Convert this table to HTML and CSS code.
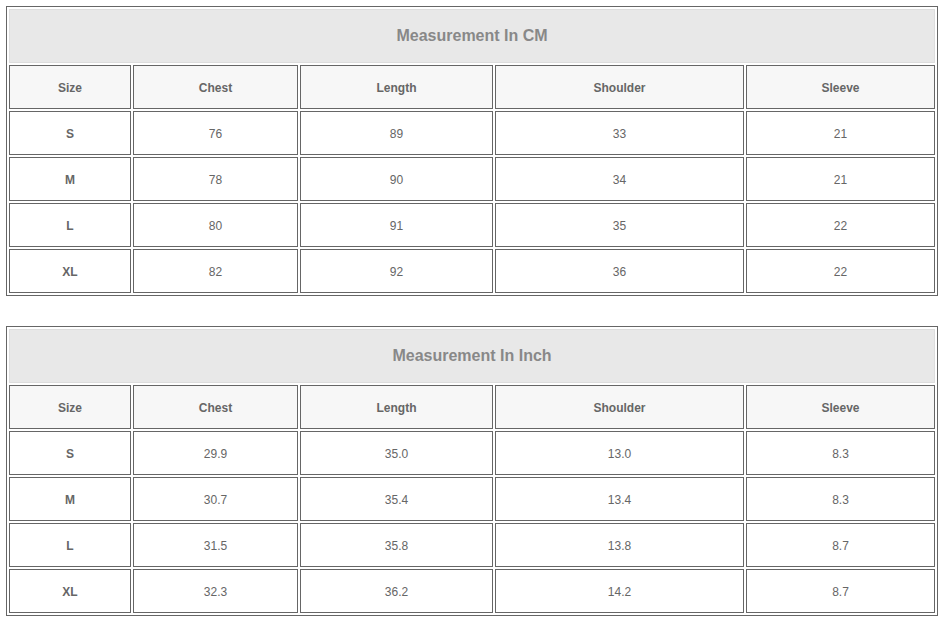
FILE: index.html
```html
<!DOCTYPE html>
<html>
<head>
<meta charset="utf-8">
<link rel="stylesheet" href="styles.css">
</head>
<body>
<table class="size-table">
  <colgroup><col class="c1"><col class="c2"><col class="c3"><col class="c4"><col class="c5"></colgroup>
  <tr><td class="title" colspan="5">Measurement In CM</td></tr>
  <tr class="head"><td>Size</td><td>Chest</td><td>Length</td><td>Shoulder</td><td>Sleeve</td></tr>
  <tr><td class="label">S</td><td>76</td><td>89</td><td>33</td><td>21</td></tr>
  <tr><td class="label">M</td><td>78</td><td>90</td><td>34</td><td>21</td></tr>
  <tr><td class="label">L</td><td>80</td><td>91</td><td>35</td><td>22</td></tr>
  <tr><td class="label">XL</td><td>82</td><td>92</td><td>36</td><td>22</td></tr>
</table>
<table class="size-table second">
  <colgroup><col class="c1"><col class="c2"><col class="c3"><col class="c4"><col class="c5"></colgroup>
  <tr><td class="title" colspan="5">Measurement In Inch</td></tr>
  <tr class="head"><td>Size</td><td>Chest</td><td>Length</td><td>Shoulder</td><td>Sleeve</td></tr>
  <tr><td class="label">S</td><td>29.9</td><td>35.0</td><td>13.0</td><td>8.3</td></tr>
  <tr><td class="label">M</td><td>30.7</td><td>35.4</td><td>13.4</td><td>8.3</td></tr>
  <tr><td class="label">L</td><td>31.5</td><td>35.8</td><td>13.8</td><td>8.7</td></tr>
  <tr><td class="label">XL</td><td>32.3</td><td>36.2</td><td>14.2</td><td>8.7</td></tr>
</table>
</body>
</html>
```
FILE: styles.css
```css
html, body {
  margin: 0;
  background: #ffffff;
}
body {
  padding: 6px;
  font-family: "Liberation Sans", Arial, sans-serif;
}
.size-table {
  border-collapse: separate;
  border-spacing: 2px;
  border: 1px solid #666666;
  width: 932px;
  table-layout: fixed;
}
.size-table.second {
  margin-top: 30px;
}
.size-table td {
  box-sizing: border-box;
  border: 1px solid #666666;
  height: 44px;
  padding: 1px 0 0 0;
  text-align: center;
  vertical-align: middle;
  font-size: 12px;
  color: #666666;
  background: #ffffff;
}
.size-table td.title {
  height: 54px;
  padding: 0;
  background: #e8e8e8;
  border: 1px solid #dddddd;
  font-size: 16px;
  font-weight: bold;
  color: #888888;
}
.size-table .head td {
  background: #f7f7f7;
  font-weight: bold;
}
.size-table td.label {
  font-weight: bold;
}
.c1 { width: 122px; }
.c2 { width: 165px; }
.c3 { width: 193px; }
.c4 { width: 249px; }
.c5 { width: 189px; }
```
